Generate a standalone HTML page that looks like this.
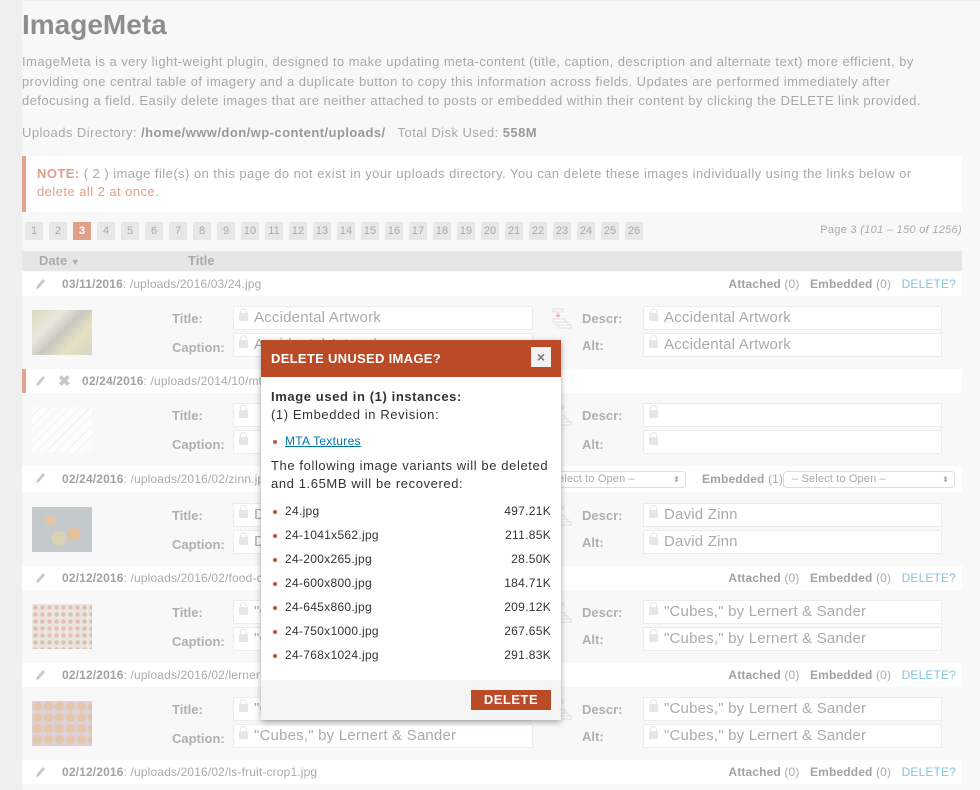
<!DOCTYPE html>
<html><head><meta charset="utf-8">
<style>
*{margin:0;padding:0;box-sizing:border-box}
body{width:980px;height:790px;overflow:hidden;background:#efefef;font-family:"Liberation Sans",sans-serif;position:relative;color:#a3a3a3}
.a{position:absolute;white-space:nowrap}
#pg{position:absolute;left:22px;top:1px;width:958px;height:789px;background:#f8f8f8}
h1{position:absolute;left:22px;top:9px;font-size:28px;font-weight:bold;color:#8e8e8e}
.p{font-size:13px;color:#a8a8a8;line-height:19.5px;letter-spacing:0.45px}
.note{position:absolute;left:22px;top:156px;width:940px;height:56px;background:#fff;border-left:4px solid #e3a591}
.pn{position:absolute;top:222px;width:18px;height:18px;background:#e7e7e7;color:#aaa;font-size:11px;text-align:center;line-height:18px}
.hb{position:absolute;left:22px;top:251px;width:940px;height:20px;background:#e6e6e6}
.rh{position:absolute;left:22px;width:940px;height:24px;background:#fff;font-size:12px;color:#aaa;letter-spacing:0.15px}
.rh b{color:#a2a2a2}
.rh .r{position:absolute;right:6px;top:5px}
.rh .r span{color:#88c3de}
.pen{position:absolute;left:12px;top:5px;width:12px;height:14px}
.lbl{position:absolute;font-size:13px;font-weight:bold;color:#b0b0b0}
.in{position:absolute;height:24px;background:#fff;border:1px solid #ececec;font-size:15px;color:#ababab;padding-left:20px;line-height:22px;white-space:nowrap;overflow:hidden;letter-spacing:0.2px}
.in:before{content:"";position:absolute;left:5px;top:6px;width:9px;height:8px;background:#e6e6e6;border-radius:1px}
.in:after{content:"";position:absolute;left:6px;top:1px;width:5px;height:6px;border:1.5px solid #e6e6e6;border-bottom:none;border-radius:4px 4px 0 0}
.th{position:absolute;left:32px;width:60px;height:45px;opacity:.6}
.ico{position:absolute;left:552px;width:22px;height:22px}
.sel{position:absolute;height:17px;border:1px solid #ddd;border-radius:4px;background:#fff;font-size:11px;color:#aaa;padding-left:8px;line-height:15px}
#m{position:absolute;left:261px;top:340px;width:300px;height:380px;background:#fff;box-shadow:0 2px 6px rgba(0,0,0,.35);color:#333;font-size:13px}
#mh{height:37px;background:#bb4a27;color:#fff;font-weight:bold;font-size:13px;padding:11px 10px;letter-spacing:0.3px}
#mx{position:absolute;left:270px;top:7px;width:20px;height:20px;background:#f3f3f3;color:#777;font-size:14px;text-align:center;line-height:20px;font-weight:bold}
.mt{letter-spacing:0.6px}
.li{position:absolute;left:12px;width:278px;font-size:12px;color:#333;letter-spacing:0.3px}
.li:before{content:"";position:absolute;left:0;top:6px;width:4px;height:4px;border-radius:2px;background:#c0533a}
.li span{position:absolute;left:12px}
.li i{position:absolute;right:0;font-style:normal}
</style></head><body>
<div id="pg"></div>
<h1>ImageMeta</h1>
<div class="a p" style="left:22px;top:52px">ImageMeta is a very light-weight plugin, designed to make updating meta-content (title, caption, description and alternate text) more efficient, by<br>providing one central table of imagery and a duplicate button to copy this information across fields. Updates are performed immediately after<br>defocusing a field. Easily delete images that are neither attached to posts or embedded within their content by clicking the DELETE link provided.</div>
<div class="a p" style="left:22px;top:123px">Uploads Directory: <b style="color:#999">/home/www/don/wp-content/uploads/</b> &nbsp; Total Disk Used: <b style="color:#999">558M</b></div>
<div class="note"><div class="a p" style="left:11px;top:9px;line-height:18px"><b style="color:#e0a08a">NOTE:</b> ( 2 ) image file(s) on this page do not exist in your uploads directory. You can delete these images individually using the links below or<br><span style="color:#e0a08a">delete all 2 at once</span>.</div></div>

<div class="pn" style="left:25px">1</div><div class="pn" style="left:49px">2</div><div class="pn" style="left:73px;background:#e0a08a;color:#fff;font-weight:bold">3</div><div class="pn" style="left:97px">4</div><div class="pn" style="left:121px">5</div><div class="pn" style="left:145px">6</div><div class="pn" style="left:169px">7</div><div class="pn" style="left:193px">8</div><div class="pn" style="left:217px">9</div><div class="pn" style="left:241px">10</div><div class="pn" style="left:265px">11</div><div class="pn" style="left:289px">12</div><div class="pn" style="left:313px">13</div><div class="pn" style="left:337px">14</div><div class="pn" style="left:361px">15</div><div class="pn" style="left:385px">16</div><div class="pn" style="left:409px">17</div><div class="pn" style="left:433px">18</div><div class="pn" style="left:457px">19</div><div class="pn" style="left:481px">20</div><div class="pn" style="left:505px">21</div><div class="pn" style="left:529px">22</div><div class="pn" style="left:553px">23</div><div class="pn" style="left:577px">24</div><div class="pn" style="left:601px">25</div><div class="pn" style="left:625px">26</div>
<div class="a" style="right:18px;top:224px;font-size:11px;color:#aaa;letter-spacing:0.3px">Page 3 <i>(101 – 150 of 1256)</i></div>

<div class="hb"><div class="a" style="left:17px;top:2px;font-size:13px;font-weight:bold;color:#aaa">Date <span style="font-size:9px">▼</span></div><div class="a" style="left:166px;top:2px;font-size:13px;font-weight:bold;color:#aaa">Title</div></div>

<!-- row1 -->
<div class="rh" style="top:272px"><svg class="pen" viewBox="0 0 12 14"><path d="M2 12 L3 9 L9 2 L11 4 L5 11 Z" fill="#c8c8c8"/></svg><div class="a" style="left:40px;top:5px"><b>03/11/2016</b>: /uploads/2016/03/24.jpg</div><div class="r"><b>Attached</b> (0) &nbsp; <b>Embedded</b> (0) &nbsp; <span>DELETE?</span></div></div>
<div class="th" style="top:310px;background:linear-gradient(135deg,#c9c39a,#e0dcc8 30%,#a9a69a 50%,#dad39e 70%,#bdbbaa)"></div>
<div class="lbl" style="left:172px;top:311px">Title:</div><div class="lbl" style="left:172px;top:340px">Caption:</div>
<div class="in" style="left:233px;top:306px;width:300px">Accidental Artwork</div><div class="in" style="left:233px;top:333px;width:300px">Accidental Artwork</div>
<svg class="ico" style="top:308px" viewBox="0 0 22 22"><rect x="1" y="1" width="10" height="3" fill="none" stroke="#ddd"/><path d="M6 5v4M4 7l2 2 2-2" stroke="#e6a996" fill="none"/><rect x="1" y="11" width="12" height="3" fill="#fff" stroke="#ddd"/><rect x="4" y="14" width="12" height="3" fill="#fff" stroke="#ddd"/><rect x="7" y="17" width="12" height="3" fill="#fff" stroke="#ddd"/></svg>
<div class="lbl" style="left:582px;top:311px">Descr:</div><div class="lbl" style="left:582px;top:338px">Alt:</div>
<div class="in" style="left:643px;top:306px;width:299px">Accidental Artwork</div><div class="in" style="left:643px;top:333px;width:299px">Accidental Artwork</div>

<!-- row2 -->
<div class="rh" style="top:369px;border-left:4px solid #e3a591"><svg class="pen" style="left:8px" viewBox="0 0 12 14"><path d="M2 12 L3 9 L9 2 L11 4 L5 11 Z" fill="#c8c8c8"/></svg><div class="a" style="left:32px;top:3px;font-size:15px;font-weight:bold;color:#c8c8c8">✖</div><div class="a" style="left:56px;top:5px"><b>02/24/2016</b>: /uploads/2014/10/mta-textures.jpg</div></div>
<div class="th" style="top:407px;background:repeating-linear-gradient(135deg,#fff 0 6px,#eee 6px 7px)"></div>
<div class="lbl" style="left:172px;top:408px">Title:</div><div class="lbl" style="left:172px;top:437px">Caption:</div>
<div class="in" style="left:233px;top:403px;width:300px"></div><div class="in" style="left:233px;top:430px;width:300px"></div>
<svg class="ico" style="top:405px" viewBox="0 0 22 22"><rect x="1" y="1" width="10" height="3" fill="none" stroke="#ddd"/><path d="M6 5v4M4 7l2 2 2-2" stroke="#e6a996" fill="none"/><rect x="1" y="11" width="12" height="3" fill="#fff" stroke="#ddd"/><rect x="4" y="14" width="12" height="3" fill="#fff" stroke="#ddd"/><rect x="7" y="17" width="12" height="3" fill="#fff" stroke="#ddd"/></svg>
<div class="lbl" style="left:582px;top:408px">Descr:</div><div class="lbl" style="left:582px;top:437px">Alt:</div>
<div class="in" style="left:643px;top:403px;width:299px"></div><div class="in" style="left:643px;top:430px;width:299px"></div>

<!-- row3 -->
<div class="rh" style="top:466px;height:26px"><svg class="pen" viewBox="0 0 12 14"><path d="M2 12 L3 9 L9 2 L11 4 L5 11 Z" fill="#c8c8c8"/></svg><div class="a" style="left:40px;top:6px"><b>02/24/2016</b>: /uploads/2016/02/zinn.jpg</div><div class="a" style="left:433px;top:6px"><b>Attached</b> (1)</div><div class="sel" style="left:510px;top:5px;width:154px">– Select to Open –<span style="position:absolute;right:5px;font-size:8px">⬍</span></div><div class="a" style="left:680px;top:6px"><b>Embedded</b> (1)</div><div class="sel" style="left:761px;top:5px;width:172px">– Select to Open –<span style="position:absolute;right:5px;font-size:8px">⬍</span></div></div>
<div class="th" style="top:507px;background:radial-gradient(circle at 30% 30%,#d9a66a 0 5px,transparent 6px),radial-gradient(circle at 70% 60%,#d99e5a 0 6px,transparent 7px),radial-gradient(circle at 45% 70%,#c9b98a 0 7px,transparent 8px),#a3aab0"></div>
<div class="lbl" style="left:172px;top:508px">Title:</div><div class="lbl" style="left:172px;top:537px">Caption:</div>
<div class="in" style="left:233px;top:503px;width:300px">David Zinn</div><div class="in" style="left:233px;top:530px;width:300px">David Zinn</div>
<svg class="ico" style="top:505px" viewBox="0 0 22 22"><rect x="1" y="1" width="10" height="3" fill="none" stroke="#ddd"/><path d="M6 5v4M4 7l2 2 2-2" stroke="#e6a996" fill="none"/><rect x="1" y="11" width="12" height="3" fill="#fff" stroke="#ddd"/><rect x="4" y="14" width="12" height="3" fill="#fff" stroke="#ddd"/><rect x="7" y="17" width="12" height="3" fill="#fff" stroke="#ddd"/></svg>
<div class="lbl" style="left:582px;top:508px">Descr:</div><div class="lbl" style="left:582px;top:535px">Alt:</div>
<div class="in" style="left:643px;top:503px;width:299px">David Zinn</div><div class="in" style="left:643px;top:530px;width:299px">David Zinn</div>

<!-- row4 -->
<div class="rh" style="top:566px"><svg class="pen" viewBox="0 0 12 14"><path d="M2 12 L3 9 L9 2 L11 4 L5 11 Z" fill="#c8c8c8"/></svg><div class="a" style="left:40px;top:5px"><b>02/12/2016</b>: /uploads/2016/02/food-cubes.jpg</div><div class="r"><b>Attached</b> (0) &nbsp; <b>Embedded</b> (0) &nbsp; <span>DELETE?</span></div></div>
<div class="th" style="top:604px;background:radial-gradient(circle,#d69a7a 0 2px,transparent 2.5px) 0 0/7px 7px,#e0dcd8"></div>
<div class="lbl" style="left:172px;top:605px">Title:</div><div class="lbl" style="left:172px;top:634px">Caption:</div>
<div class="in" style="left:233px;top:600px;width:300px">"Cubes," by Lernert &amp; Sander</div><div class="in" style="left:233px;top:627px;width:300px">"Cubes," by Lernert &amp; Sander</div>
<svg class="ico" style="top:602px" viewBox="0 0 22 22"><rect x="1" y="1" width="10" height="3" fill="none" stroke="#ddd"/><path d="M6 5v4M4 7l2 2 2-2" stroke="#e6a996" fill="none"/><rect x="1" y="11" width="12" height="3" fill="#fff" stroke="#ddd"/><rect x="4" y="14" width="12" height="3" fill="#fff" stroke="#ddd"/><rect x="7" y="17" width="12" height="3" fill="#fff" stroke="#ddd"/></svg>
<div class="lbl" style="left:582px;top:605px">Descr:</div><div class="lbl" style="left:582px;top:632px">Alt:</div>
<div class="in" style="left:643px;top:600px;width:299px">"Cubes," by Lernert &amp; Sander</div><div class="in" style="left:643px;top:627px;width:299px">"Cubes," by Lernert &amp; Sander</div>

<!-- row5 -->
<div class="rh" style="top:663px"><svg class="pen" viewBox="0 0 12 14"><path d="M2 12 L3 9 L9 2 L11 4 L5 11 Z" fill="#c8c8c8"/></svg><div class="a" style="left:40px;top:5px"><b>02/12/2016</b>: /uploads/2016/02/lernert-sander.jpg</div><div class="r"><b>Attached</b> (0) &nbsp; <b>Embedded</b> (0) &nbsp; <span>DELETE?</span></div></div>
<div class="th" style="top:701px;background:radial-gradient(circle,#d7a67a 0 4px,transparent 5px) 0 0/11px 11px,#c9b8c0"></div>
<div class="lbl" style="left:172px;top:702px">Title:</div><div class="lbl" style="left:172px;top:731px">Caption:</div>
<div class="in" style="left:233px;top:697px;width:300px">"Cubes," by Lernert &amp; Sander</div><div class="in" style="left:233px;top:724px;width:300px">"Cubes," by Lernert &amp; Sander</div>
<svg class="ico" style="top:699px" viewBox="0 0 22 22"><rect x="1" y="1" width="10" height="3" fill="none" stroke="#ddd"/><path d="M6 5v4M4 7l2 2 2-2" stroke="#e6a996" fill="none"/><rect x="1" y="11" width="12" height="3" fill="#fff" stroke="#ddd"/><rect x="4" y="14" width="12" height="3" fill="#fff" stroke="#ddd"/><rect x="7" y="17" width="12" height="3" fill="#fff" stroke="#ddd"/></svg>
<div class="lbl" style="left:582px;top:702px">Descr:</div><div class="lbl" style="left:582px;top:729px">Alt:</div>
<div class="in" style="left:643px;top:697px;width:299px">"Cubes," by Lernert &amp; Sander</div><div class="in" style="left:643px;top:724px;width:299px">"Cubes," by Lernert &amp; Sander</div>

<!-- row6 -->
<div class="rh" style="top:760px"><svg class="pen" viewBox="0 0 12 14"><path d="M2 12 L3 9 L9 2 L11 4 L5 11 Z" fill="#c8c8c8"/></svg><div class="a" style="left:40px;top:5px"><b>02/12/2016</b>: /uploads/2016/02/ls-fruit-crop1.jpg</div><div class="r"><b>Attached</b> (0) &nbsp; <b>Embedded</b> (0) &nbsp; <span>DELETE?</span></div></div>

<!-- modal -->
<div id="m">
<div id="mh">DELETE UNUSED IMAGE?</div>
<div id="mx">×</div>
<div class="a mt" style="left:10px;top:48px;line-height:18px"><b>Image used in (1) instances:</b><br>(1) Embedded in Revision:</div>
<div class="li" style="top:94px"><span style="color:#0073aa;text-decoration:underline">MTA Textures</span></div>
<div class="a mt" style="left:10px;top:117px;line-height:18px">The following image variants will be deleted<br>and 1.65MB will be recovered:</div>
<div class="li" style="top:164px"><span>24.jpg</span><i>497.21K</i></div>
<div class="li" style="top:188px"><span>24-1041x562.jpg</span><i>211.85K</i></div>
<div class="li" style="top:212px"><span>24-200x265.jpg</span><i>28.50K</i></div>
<div class="li" style="top:236px"><span>24-600x800.jpg</span><i>184.71K</i></div>
<div class="li" style="top:260px"><span>24-645x860.jpg</span><i>209.12K</i></div>
<div class="li" style="top:284px"><span>24-750x1000.jpg</span><i>267.65K</i></div>
<div class="li" style="top:308px"><span>24-768x1024.jpg</span><i>291.83K</i></div>
<div class="a" style="left:0;top:340px;width:300px;height:40px;background:#f5f5f5"></div>
<div class="a" style="left:210px;top:350px;width:80px;height:20px;background:#bb4a27;color:#fff;font-weight:bold;font-size:13px;text-align:center;line-height:20px;letter-spacing:0.5px">DELETE</div>
</div>
</body></html>
